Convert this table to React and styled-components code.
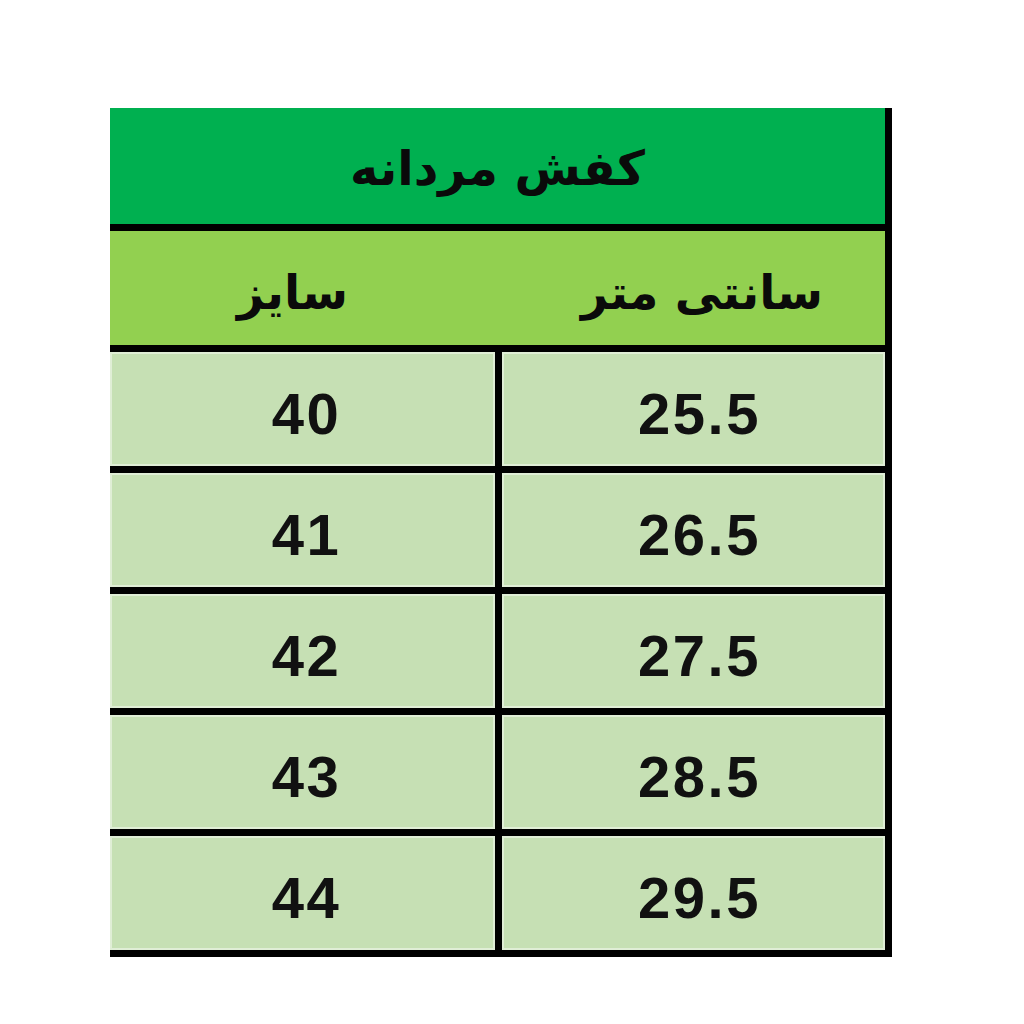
import { Fragment } from "react";
import styled, { createGlobalStyle } from "styled-components";

const GlobalStyle = createGlobalStyle`
    body {
        margin: 0;
        background: #ffffff;
        font-family: "Liberation Sans", Arial, sans-serif;
    }
`;

const Page = styled.div`
    padding: 108px 0 0 110px;
`;

const Table = styled.div`
    display: grid;
    grid-template-columns: 385px 383px;
    column-gap: 7px;
    row-gap: 7px;
    width: max-content;
    background: #000;
    padding: 0 7px 7px 0;
`;

const Banner = styled.div`
    grid-column: 1 / -1;
    height: ${props => props.h}px;
    background: ${props => props.bg};
    display: grid;
    grid-template-columns: 385px 390px;
    align-items: center;
    justify-items: center;
`;

const Persian = styled.span`
    font-family: "DejaVu Sans", "Noto Sans", sans-serif;
    font-weight: bold;
    font-size: ${props => props.size}px;
    color: #0a0a0a;
    direction: rtl;
    transform: translate(${props => props.dx || 0}px, ${props => props.dy || 0}px);
    grid-column: ${props => props.span ? "1 / -1" : "auto"};
`;

const Cell = styled.div`
    height: 114px;
    background: #c6e0b4;
    box-shadow: inset 0 0 0 2px rgba(255, 255, 255, 0.45);
    display: flex;
    align-items: center;
    justify-content: center;
    font-family: "Liberation Sans", Arial, sans-serif;
    font-weight: bold;
    font-size: 58px;
    letter-spacing: 2.5px;
    color: #111;
    padding: 8px 0 0 ${props => props.shift}px;
    box-sizing: border-box;
`;

const rows = [
    ["40", "25.5"],
    ["41", "26.5"],
    ["42", "27.5"],
    ["43", "28.5"],
    ["44", "29.5"],
];

export default function App() {
    return (
        <>
            <GlobalStyle />
            <Page>
                <Table>
                    <Banner h={116} bg="#00b050">
                        <Persian span size={48} dy={2}>کفش مردانه</Persian>
                    </Banner>
                    <Banner h={114} bg="#92d050">
                        <Persian size={47} dx={-10} dy={4}>سایز</Persian>
                        <Persian size={47} dx={12} dy={4}>سانتی متر</Persian>
                    </Banner>
                    {rows.map(([size, cm]) => (
                        <Fragment key={size}>
                            <Cell shift={8}>{size}</Cell>
                            <Cell shift={12}>{cm}</Cell>
                        </Fragment>
                    ))}
                </Table>
            </Page>
        </>
    );
}
